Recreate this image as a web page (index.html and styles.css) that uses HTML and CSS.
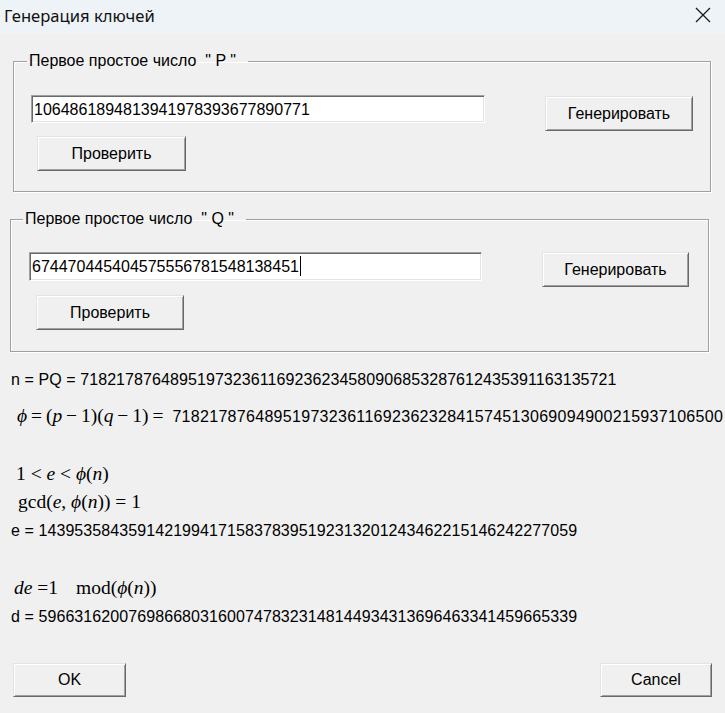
FILE: index.html
```html
<!DOCTYPE html>
<html>
<head>
<meta charset="utf-8">
<title>Генерация ключей</title>
<link rel="stylesheet" href="styles.css">
</head>
<body>

<div class="titlebar">
    <span class="title">Генерация ключей</span>
    <svg class="close" width="16" height="16" viewBox="0 0 16 16"><path d="M1 1L15 15M15 1L1 15" stroke="#1a1a1a" stroke-width="1.3" fill="none"/></svg>
</div>

<fieldset class="group group-p">
    <legend>Первое простое число &nbsp;" P "</legend>
    <div class="group-body">
        <div class="field">1064861894813941978393677890771</div>
        <button class="btn btn-gen">Генерировать</button>
        <button class="btn btn-check">Проверить</button>
    </div>
</fieldset>

<fieldset class="group group-q">
    <legend>Первое простое число &nbsp;" Q "</legend>
    <div class="group-body">
        <div class="field">674470445404575556781548138451<span class="caret"></span></div>
        <button class="btn btn-gen">Генерировать</button>
        <button class="btn btn-check">Проверить</button>
    </div>
</fieldset>

<div class="results">
    <div class="line line-n">n = PQ = 718217876489519732361169236234580906853287612435391163135721</div>
    <div class="line line-phi"><span class="math"><i>ϕ</i>&thinsp;=&thinsp;(<i>p</i>&thinsp;−&thinsp;1)(<i>q</i>&thinsp;−&thinsp;1)&thinsp;=</span> <span class="num">718217876489519732361169236232841574513069094900215937106500</span></div>
    <div class="math m-range">1 &lt; <i>e</i> &lt; <i>ϕ</i>(<i>n</i>)</div>
    <div class="math m-gcd">gcd(<i>e</i>, <i>ϕ</i>(<i>n</i>)) = 1</div>
    <div class="line line-e">e = 143953584359142199417158378395192313201243462215146242277059</div>
    <div class="math m-mod"><i>de</i> =1<span class="mod">mod(<i>ϕ</i>(<i>n</i>))</span></div>
    <div class="line line-d">d = 596631620076986680316007478323148144934313696463341459665339</div>
</div>

<div class="footer">
    <button class="btn btn-ok">OK</button>
    <button class="btn btn-cancel">Cancel</button>
</div>

</body>
</html>
```

FILE: styles.css
```css
html, body {margin:0; padding:0;}
body {width:725px; height:713px; overflow:hidden; background:#f0f0f0; font:16px/18px "Liberation Sans", Arial, sans-serif; color:#000; display:flex; flex-direction:column;}
/* window title bar */
.titlebar {height:34px; flex:none; background:#eef3f8; display:flex; align-items:center; justify-content:space-between; padding:0 14px 0 4px;}
.title {font:16.6px "Noto Sans", sans-serif; color:#111; margin-top:-3px;}
.close {display:block; margin-top:-4px;}
/* group boxes */
.group {margin:18px 0 0; padding:0; border:1px solid #a0a0a0; box-shadow:1px 1px 0 #fff, inset 1px 1px 0 #fff; min-width:0;}
.group legend {padding:0 12px 0 2px; font:16px/18px "Liberation Sans", Arial, sans-serif;}
.group-body {display:grid; grid-template-columns:auto 148px; column-gap:60px; justify-content:start;}
.group-p {margin-left:13px; width:698px; box-sizing:border-box;}
.group-p legend {margin-left:13px;}
.group-p .group-body {padding:25px 0 20px 17px; row-gap:13px; grid-template-columns:454px 148px;}
.group-q {margin-left:10px; width:699px; box-sizing:border-box;}
.group-q legend {margin-left:12px;}
.group-q .group-body {padding:24px 0 21px 18px; row-gap:14px; grid-template-columns:453px 147px;}
.group-q .field {height:29px;}
/* sunken text field */
.field {height:28px; box-sizing:border-box; background:#fff; padding:3px 2px 0; line-height:22px; white-space:nowrap; overflow:hidden; border:1px solid; border-color:#a0a0a0 #fff #fff #a0a0a0; box-shadow:inset 1px 1px 0 #696969, inset -1px -1px 0 #e3e3e3;}
.caret {display:inline-block; width:1px; height:20px; background:#000; vertical-align:-4px; margin-left:1px;}
/* raised buttons */
.btn {box-sizing:border-box; height:35px; background:#f0f0f0; font:16px "Liberation Sans", Arial, sans-serif; color:#000; padding:0; border:1px solid; border-color:#e3e3e3 #696969 #696969 #e3e3e3; box-shadow:inset 1px 1px 0 #fff, inset -1px -1px 0 #a0a0a0;}
.btn-gen {grid-column:2; grid-row:1 / span 2; align-self:start; margin-top:1px; width:148px;}
.group-q .btn-gen {margin-top:0; width:147px;}
.btn-check {grid-column:1; grid-row:2; width:149px; justify-self:start; margin-left:6px;}
.group-q .btn-check {margin-left:7px; width:148px;}
/* calculated values */
.results {padding-left:11px;}
.line {white-space:nowrap; height:18px; letter-spacing:0.08px;}
.line-n {margin-top:19px;}
.line-phi {margin-top:14px; height:28px; line-height:28px; display:flex; align-items:baseline; margin-left:6px;}
.line-phi .num {letter-spacing:0.3px;}
.line-e, .line-d {margin-top:8px;}
.math {font:19.5px/24px "Liberation Serif", "Times New Roman", serif; white-space:nowrap; letter-spacing:0;}
.math i {font-style:italic;}
.line-phi .math {margin-right:9px;}
.m-range {margin-top:31px; margin-left:5px; height:24px;}
.m-gcd {margin-top:4px; margin-left:7px; height:24px;}
.m-mod {margin-top:36px; margin-left:3px; height:24px;}
.mod {margin-left:18px;}
/* dialog buttons */
.footer {margin-top:auto; display:flex; justify-content:space-between; padding:0 13px 16px;}
.btn-ok {width:113px; height:34px;}
.btn-cancel {width:112px; height:34px;}
```
